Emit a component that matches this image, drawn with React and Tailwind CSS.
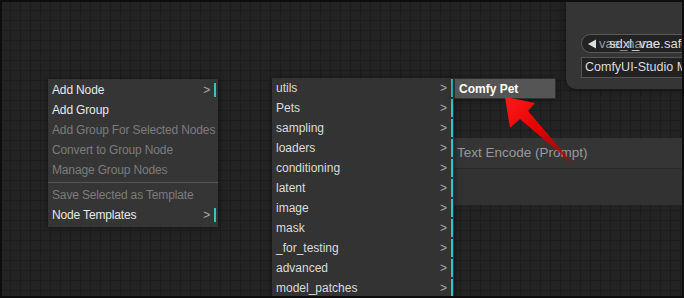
import React from "react";

const font = { fontFamily: '"Liberation Sans", Arial, sans-serif' };

function Bar({ h = "h-[14px]" }) {
  return <span className={`w-[2px] ${h} bg-[#2ec6c6] ml-[4px]`} />;
}

function MainMenu() {
  const items = [
    { label: "Add Node", sub: true },
    { label: "Add Group" },
    { label: "Add Group For Selected Nodes", disabled: true },
    { label: "Convert to Group Node", disabled: true },
    { label: "Manage Group Nodes", disabled: true },
    { sep: true },
    { label: "Save Selected as Template", disabled: true },
    { label: "Node Templates", sub: true },
  ];
  return (
    <div className="mt-[1px] w-[170px] bg-[#353535] pt-[1px] pb-[2px] shadow-[0_0_6px_rgba(0,0,0,0.5)] tracking-[-0.15px]">
      {items.map((it, i) =>
        it.sep ? (
          <div key={i} className="my-[2px] h-px bg-[#555]" />
        ) : (
          <div key={i} className="h-[20px] flex items-center pl-[4px] pr-[2px] text-[12px] whitespace-nowrap">
            <span className={`flex-1 ${it.disabled ? "text-[#7c7c7c]" : "text-[#e8e8e8]"}`}>{it.label}</span>
            {it.sub && (
              <>
                <span className="text-[#aaa]">&gt;</span>
                <Bar />
              </>
            )}
          </div>
        )
      )}
    </div>
  );
}

function CategoryMenu() {
  const cats = ["utils", "Pets", "sampling", "loaders", "conditioning", "latent", "image", "mask", "_for_testing", "advanced", "model_patches"];
  return (
    <div className="ml-[54px] w-[182px] bg-[#333] shadow-[0_0_6px_rgba(0,0,0,0.5)]">
      {cats.map((c) => (
        <div key={c} className="h-[20px] flex items-center pl-[4px] pr-[1px] text-[12px]">
          <span className="flex-1 text-[#dcdcdc]">{c}</span>
          <span className="text-[#aaa]">&gt;</span>
          <Bar h="h-[18px]" />
        </div>
      ))}
    </div>
  );
}

function PetMenu() {
  return (
    <div className="w-[102px] bg-[#2f2f2f] p-[1px] shadow-[0_0_6px_rgba(0,0,0,0.5)]">
      <div className="h-[19px] flex items-center pl-[4px] bg-[#555] text-[12px] font-bold text-white">Comfy Pet</div>
    </div>
  );
}

function LoaderNode() {
  return (
    <div className="absolute left-[566px] top-0 w-[130px] h-[89px] bg-[#353535] rounded-bl-[10px] shadow-[0_0_6px_rgba(0,0,0,0.6)] pt-[34px] pl-[15px] flex flex-col gap-[4px]">
      <div className="relative w-[130px] h-[19px] rounded-l-full border border-[#5a5a5a] bg-[#222] flex items-center">
        <svg width="10" height="10" viewBox="0 0 10 10" className="ml-[5px]">
          <polygon points="1,5 9,0.5 9,9.5" fill="#ddd" />
        </svg>
        <span className="absolute left-[17px] text-[13px] text-[#999]">vae_name</span>
        <span className="absolute left-[27px] text-[13px] text-[#ddd] whitespace-nowrap">sdxl_vae.safetensors</span>
      </div>
      <div className="w-[130px] h-[21px] border border-[#555] bg-[#222] flex items-center pl-[3px] text-[12.5px] text-[#ddd] whitespace-nowrap">
        ComfyUI-Studio Models
      </div>
    </div>
  );
}

function TextEncodeNode() {
  return (
    <div className="absolute left-[440px] top-[138px] w-[260px]">
      <div className="h-[30px] bg-[#353535] flex items-center pl-[17px] text-[13.5px] text-[#999]">Text Encode (Prompt)</div>
      <div className="h-[37px] bg-[#323232] border-t border-[#2a2a2a]" />
    </div>
  );
}

function Arrow() {
  return (
    <svg className="absolute inset-0 pointer-events-none" width="684" height="298">
      <defs>
        <linearGradient id="ag" x1="505" y1="97" x2="575" y2="166" gradientUnits="userSpaceOnUse">
          <stop offset="0" stopColor="#ff1a1a" />
          <stop offset="0.5" stopColor="#e00000" />
          <stop offset="1" stopColor="#b00000" stopOpacity="0.5" />
        </linearGradient>
      </defs>
      <polygon points="505,97 510,128 520,119 575,166 528,111 535,103" fill="url(#ag)" />
    </svg>
  );
}

export default function App() {
  return (
    <div
      style={font}
      className="relative w-[684px] h-[298px] overflow-hidden bg-[#232323] bg-[linear-gradient(#1c1c1c_1px,transparent_1px),linear-gradient(90deg,#1c1c1c_1px,transparent_1px)] bg-[length:10px_10px]"
    >
      <LoaderNode />
      <TextEncodeNode />
      <div className="absolute left-[48px] top-[78px] flex items-start">
        <MainMenu />
        <CategoryMenu />
        <PetMenu />
      </div>
      <Arrow />
      <div className="absolute inset-0 border-2 border-[#0d0d0d] pointer-events-none" />
    </div>
  );
}
